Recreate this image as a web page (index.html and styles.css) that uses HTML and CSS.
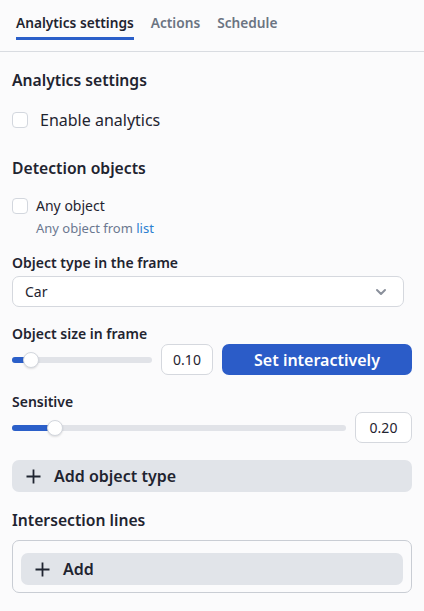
FILE: index.html
```html
<!DOCTYPE html>
<html lang="en">
<head>
<meta charset="utf-8">
<link rel="stylesheet" href="styles.css">
</head>
<body>
<nav class="tabs">
  <span class="tab active">Analytics settings</span>
  <span class="tab">Actions</span>
  <span class="tab">Schedule</span>
</nav>
<main class="content">
  <h2 class="h-section">Analytics settings</h2>
  <label class="check big"><span class="box"></span><span>Enable analytics</span></label>

  <h2 class="h-section second">Detection objects</h2>
  <div class="check-group">
    <label class="check"><span class="box"></span><span>Any object</span></label>
    <div class="hint">Any object from <span class="link">list</span></div>
  </div>

  <div class="field">
    <div class="label">Object type in the frame</div>
    <div class="select"><span>Car</span>
      <svg width="12" height="8" viewBox="0 0 12 8"><path d="M2 2l4 4 4-4" fill="none" stroke="#8a909b" stroke-width="2" stroke-linecap="round" stroke-linejoin="round"/></svg>
    </div>
  </div>

  <div class="field tight">
    <div class="label">Object size in frame</div>
    <div class="row">
      <div class="slider small"><div class="fill" style="width:19px"></div><div class="thumb" style="left:19px"></div></div>
      <div class="num">0.10</div>
      <button class="primary">Set interactively</button>
    </div>
  </div>

  <div class="field tight">
    <div class="label">Sensitive</div>
    <div class="row">
      <div class="slider wide"><div class="fill" style="width:43px"></div><div class="thumb" style="left:43px"></div></div>
      <div class="num wide-num">0.20</div>
    </div>
  </div>

  <button class="secondary add-type"><svg width="15" height="15" viewBox="0 0 15 15"><path d="M7.5 0.5v14M0.5 7.5h14" stroke="#1f2430" stroke-width="1.8"/></svg><span>Add object type</span></button>

  <h2 class="h-section lines">Intersection lines</h2>
  <div class="box-frame">
    <button class="secondary"><svg width="15" height="15" viewBox="0 0 15 15"><path d="M7.5 0.5v14M0.5 7.5h14" stroke="#1f2430" stroke-width="1.8"/></svg><span>Add</span></button>
  </div>
</main>
</body>
</html>
```
FILE: styles.css
```css
* { box-sizing: border-box; }
html, body { margin: 0; padding: 0; }
body {
  background: #fbfbfc;
  font-family: "Noto Sans", "Open Sans", sans-serif;
  color: #1f2430;
  width: 424px;
  height: 611px;
  overflow: hidden;
}
.tabs {
  display: flex;
  gap: 17px;
  padding: 0 16px;
  height: 52px;
  border-bottom: 1px solid #d9dce1;
  align-items: flex-start;
}
.tab {
  font-size: 13.7px;
  font-weight: 600;
  color: #6b7482;
  padding-top: 13px;
  height: 40px;
}
.tab.active {
  color: #1f2430;
  border-bottom: 3px solid #2b5fc9;
}
.content { padding: 0 12px; }
.h-section {
  font-size: 15.7px;
  font-weight: 600;
  margin: 17px 0 0;
  line-height: 22px;
}
.h-section.second { margin-top: 26px; }
.h-section.lines { margin-top: 17px; }
.check {
  display: flex;
  align-items: center;
  gap: 8px;
  font-size: 14px;
  line-height: 20px;
  height: 20px;
}
.check.big { font-size: 16px; gap: 12px; margin-top: 18px; height: 22px; line-height: 22px; }
.box {
  width: 16px;
  height: 16px;
  border: 1px solid #d3d7de;
  border-radius: 4px;
  background: #fff;
  flex: none;
}
.check-group { margin-top: 17px; }
.hint {
  margin-left: 24px;
  font-size: 13px;
  color: #6b7890;
  line-height: 18px;
  margin-top: 3px;
}
.link { color: #2b7fd0; }
.field { margin-top: 17px; }
.field.tight { margin-top: 18px; }
.label {
  font-size: 14px;
  font-weight: 600;
  line-height: 18px;
  margin-bottom: 4px;
}
.field.tight .label { margin-bottom: 1px; }
.select {
  height: 31px;
  margin-right: 8px;
  border: 1px solid #d5d8de;
  border-radius: 7px;
  background: #fff;
  display: flex;
  align-items: center;
  justify-content: space-between;
  padding: 0 16px 0 12px;
  font-size: 14px;
}
.row { display: flex; align-items: center; gap: 9px; height: 31px; }
.slider {
  position: relative;
  height: 6px;
  background: #e1e3e8;
  border-radius: 3px;
}
.slider.small { width: 140px; }
.slider.wide { flex: 1; }
.fill {
  position: absolute;
  left: 0; top: 0; bottom: 0;
  background: #2b5fc9;
  border-radius: 3px;
}
.thumb {
  position: absolute;
  top: 50%;
  width: 16px;
  height: 16px;
  margin: -8px 0 0 -8px;
  border-radius: 50%;
  background: #fff;
  border: 1px solid #d3d7de;
  box-shadow: 0 1px 2px rgba(0,0,0,0.12);
}
.num {
  width: 52px;
  height: 31px;
  border: 1px solid #d5d8de;
  border-radius: 7px;
  background: #fff;
  display: flex;
  align-items: center;
  justify-content: center;
  font-size: 14px;
  flex: none;
}
.num.wide-num { width: 57px; }
button {
  font-family: inherit;
  border: 0;
  cursor: pointer;
}
.primary {
  flex: 1;
  height: 31px;
  background: #2b5cc8;
  color: #fff;
  font-size: 16px;
  font-weight: 600;
  border-radius: 7px;
}
.secondary {
  width: 100%;
  height: 32px;
  background: #e1e4e9;
  color: #1f2430;
  border-radius: 7px;
  font-size: 16px;
  font-weight: 600;
  display: flex;
  align-items: center;
  gap: 13px;
  padding: 0 14px;
}
.add-type { margin-top: 17px; }
.box-frame {
  margin-top: 9px;
  border: 1px solid #c9cdd4;
  border-radius: 7px;
  padding: 12px 8px 7px;
}
```
